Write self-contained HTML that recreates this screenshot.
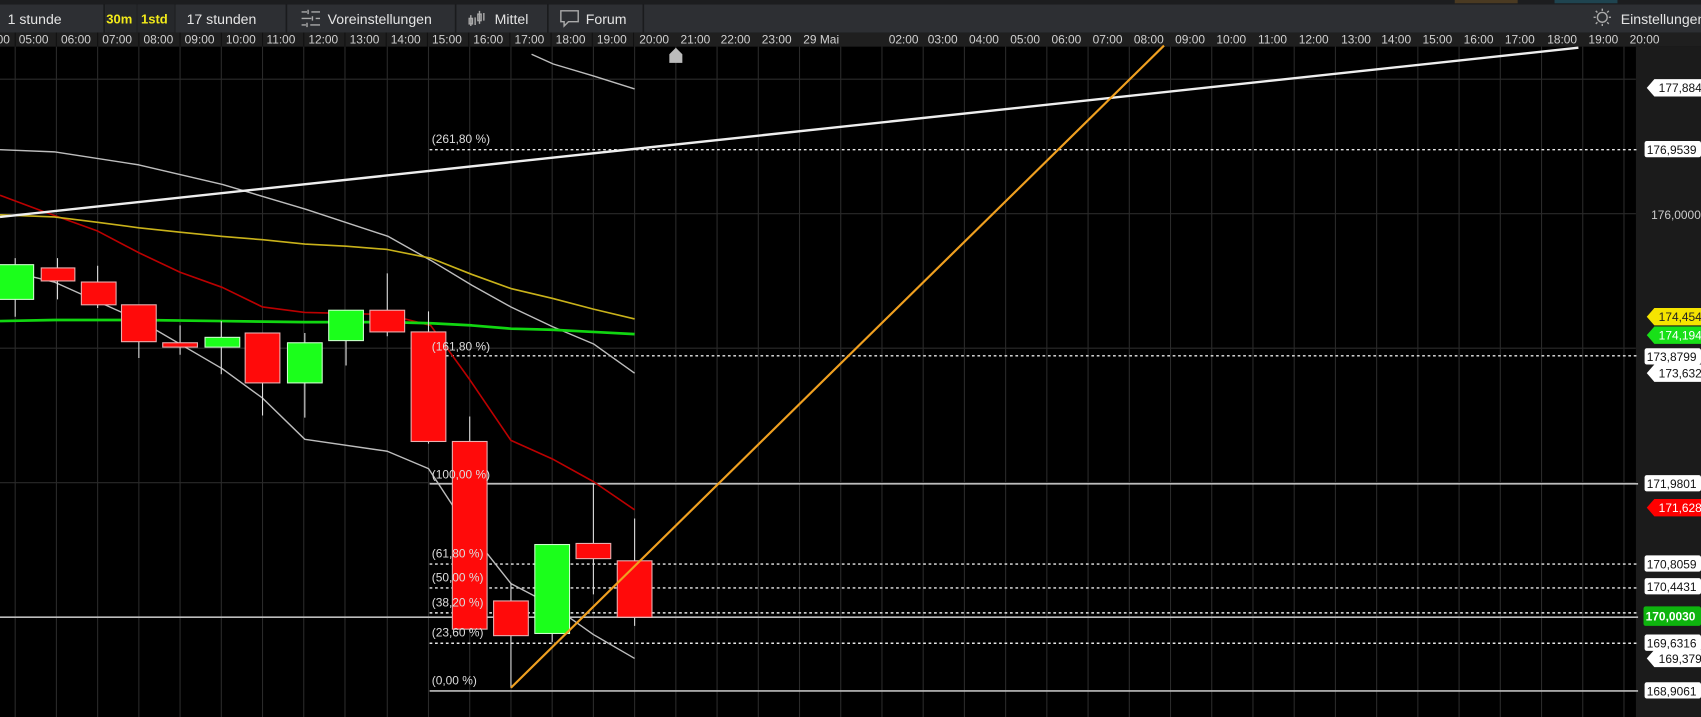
<!DOCTYPE html>
<html><head><meta charset="utf-8"><style>
html,body{margin:0;padding:0;background:#000;overflow:hidden}
svg{display:block}
text{font-family:"Liberation Sans",sans-serif}
</style></head><body>
<svg width="1701" height="717" viewBox="0 0 1568 661" preserveAspectRatio="none" xmlns="http://www.w3.org/2000/svg">
<rect x="0" y="0" width="1568" height="661" fill="#000"/>
<rect x="0" y="0" width="1568" height="4" fill="#1c1d1f"/>
<rect x="1341" y="0" width="58" height="3" fill="#4a3a22"/>
<rect x="1433" y="0" width="58" height="3" fill="#1f4450"/>
<rect x="0" y="4" width="1568" height="26" fill="#2d2f33"/>
<g stroke="#1a1b1d" stroke-width="1.5">
<line x1="96" y1="4" x2="96" y2="30"/><line x1="126" y1="4" x2="126" y2="30"/><line x1="161" y1="4" x2="161" y2="30"/>
<line x1="264" y1="4" x2="264" y2="30"/><line x1="420" y1="4" x2="420" y2="30"/><line x1="505" y1="4" x2="505" y2="30"/><line x1="593" y1="4" x2="593" y2="30"/>
</g>
<rect x="97" y="4" width="29" height="26" fill="#26282b"/>
<rect x="127" y="4" width="34" height="26" fill="#26282b"/>
<g font-size="13" fill="#e4e4e4">
<text x="7" y="22">1 stunde</text>
<text x="98" y="21.5" fill="#f2ea1a" font-weight="bold" font-size="12">30m</text>
<text x="130" y="21.5" fill="#f2ea1a" font-weight="bold" font-size="12">1std</text>
<text x="172" y="22">17 stunden</text>
<text x="302" y="22">Voreinstellungen</text>
<text x="456" y="22">Mittel</text>
<text x="540" y="22">Forum</text>
<text x="1494" y="22">Einstellungen</text>
</g>
<g stroke="#aaa" stroke-width="1.3" fill="none">
<path d="M278 11h5m4 0h8M278 17h9m4 0h4M278 23h4m4 0h9M284 9v4M288 15v4M283 21v4"/>
<path d="M434 14v10M438 16v7M442 10v12M446 12v7"/><rect x="432.5" y="17" width="3" height="5"/><rect x="440.5" y="13" width="3" height="6"/>
<path d="M517 10h16v10h-9l-4 4v-4h-3z"/>
<circle cx="1477" cy="16" r="4.5"/><path d="M1477 8v2M1477 22v2M1469 16h2M1483 16h2M1471 10l1.5 1.5M1481.5 20.5l1.5 1.5M1483 10l-1.5 1.5M1472.5 20.5l-1.5 1.5"/>
</g>
<rect x="0" y="30" width="1568" height="13" fill="#1f1f1f"/>
<g font-size="11" fill="#d0d0d0" text-anchor="middle">
<text x="3" y="40">00</text>
<text x="31" y="40">05:00</text><text x="70" y="40">06:00</text><text x="108" y="40">07:00</text><text x="146" y="40">08:00</text><text x="184" y="40">09:00</text><text x="222" y="40">10:00</text><text x="259" y="40">11:00</text><text x="298" y="40">12:00</text><text x="336" y="40">13:00</text><text x="374" y="40">14:00</text><text x="412" y="40">15:00</text><text x="450" y="40">16:00</text><text x="488" y="40">17:00</text><text x="526" y="40">18:00</text><text x="564" y="40">19:00</text><text x="603" y="40">20:00</text><text x="641" y="40">21:00</text><text x="678" y="40">22:00</text><text x="716" y="40">23:00</text><text x="757" y="40">29 Mai</text>
<text x="833" y="40">02:00</text><text x="869" y="40">03:00</text><text x="907" y="40">04:00</text><text x="945" y="40">05:00</text><text x="983" y="40">06:00</text><text x="1021" y="40">07:00</text><text x="1059" y="40">08:00</text><text x="1097" y="40">09:00</text><text x="1135" y="40">10:00</text><text x="1173" y="40">11:00</text><text x="1211" y="40">12:00</text><text x="1250" y="40">13:00</text><text x="1287" y="40">14:00</text><text x="1325" y="40">15:00</text><text x="1363" y="40">16:00</text><text x="1401" y="40">17:00</text><text x="1440" y="40">18:00</text><text x="1478" y="40">19:00</text><text x="1516" y="40">20:00</text>
</g>
<g stroke="#111" stroke-width="1">
<line x1="14" y1="30" x2="14" y2="43"/><line x1="52" y1="30" x2="52" y2="43"/><line x1="90" y1="30" x2="90" y2="43"/><line x1="128" y1="30" x2="128" y2="43"/><line x1="166" y1="30" x2="166" y2="43"/><line x1="204" y1="30" x2="204" y2="43"/><line x1="242" y1="30" x2="242" y2="43"/><line x1="280" y1="30" x2="280" y2="43"/><line x1="318" y1="30" x2="318" y2="43"/><line x1="356" y1="30" x2="356" y2="43"/><line x1="394" y1="30" x2="394" y2="43"/><line x1="432" y1="30" x2="432" y2="43"/><line x1="470" y1="30" x2="470" y2="43"/><line x1="508" y1="30" x2="508" y2="43"/><line x1="546" y1="30" x2="546" y2="43"/><line x1="584" y1="30" x2="584" y2="43"/>
</g>
<rect x="1508" y="43" width="60" height="618" fill="#1b1b1b"/>
<g stroke="#2a2a2a" stroke-width="1">
<path d="M14 43V661M52 43V661M90 43V661M128 43V661M166 43V661M204 43V661M242 43V661M280 43V661M318 43V661M357 43V661M395 43V661M433 43V661M471 43V661M509 43V661M547 43V661M585 43V661M623 43V661M661 43V661M699 43V661M737 43V661M775 43V661M813 43V661M851 43V661M889 43V661M927 43V661M965 43V661M1003 43V661M1041 43V661M1079 43V661M1117 43V661M1155 43V661M1193 43V661M1231 43V661M1269 43V661M1307 43V661M1345 43V661M1383 43V661M1421 43V661M1459 43V661M1497 43V661"/>
<path d="M0 73H1508M0 197H1508M0 321H1508M0 445H1508"/>
</g>
<g stroke="#e8e8e8" stroke-width="1.3" stroke-dasharray="2.5 2.5" fill="none">
<path d="M396 138H1510M396 328H1510M396 520H1510M396 542H1510M396 565H1510M396 593H1510"/>
</g>
<g stroke="#bdbdbd" stroke-width="1.5"><path d="M396 446H1510M396 637H1510M0 569H1510"/></g>
<g fill="none" stroke-linejoin="round">
<polyline stroke="#bdbdbd" stroke-width="1.3" points="490,50 510,59 547,70 585,82"/>
<polyline stroke="#bdbdbd" stroke-width="1.3" points="0,138 50,140 128,152 205,170 282,193 358,218 397,240 435,263 471,283 509,301 547,317 585,344"/>
<polyline stroke="#bdbdbd" stroke-width="1.3" points="0,248 50,260 128,295 205,340 242,367 281,405 357,416 395,432 433,490 471,538 509,558 547,585 585,607"/>
<polyline stroke="#b00" stroke-width="1.5" points="0,180 40,195 90,213 128,233 166,251 205,265 242,283 281,288 319,289 357,290 397,300 433,350 471,406 509,423 547,444 585,470"/>
<polyline stroke="#c9b21a" stroke-width="1.5" points="0,198 50,200 90,205 128,210 166,214 205,218 242,221 281,225 319,227 357,230 397,238 435,253 471,266 509,275 547,285 585,294"/>
<polyline stroke="#11d611" stroke-width="2.5" points="0,296 50,295 128,295 205,296 281,297 357,297 397,298 435,300 471,303 509,304 547,306 585,308"/>
</g>
<g stroke="#ddd" stroke-width="1">
<path d="M14 238V292M53 238V276M90 245V284M128 281V330M166 300V327M204 296V345M242 307V383M281 307V385M319 286V337M357 252V310M395 287V409M433 384V582M471 538V634M509 502V592M547 446V548M585 478V577"/>
</g>
<g stroke="#e8b0b0" stroke-width="1">
<rect x="-2" y="244" width="33" height="32" fill="#1bff1b" stroke="#cfc"/>
<rect x="38" y="247" width="31" height="12" fill="#ff0a0a"/>
<rect x="75" y="260" width="32" height="21" fill="#ff0a0a"/>
<rect x="112" y="281" width="32" height="34" fill="#ff0a0a"/>
<rect x="150" y="316" width="32" height="4" fill="#ff0a0a"/>
<rect x="189" y="311" width="32" height="9" fill="#1bff1b" stroke="#cfc"/>
<rect x="226" y="307" width="32" height="46" fill="#ff0a0a"/>
<rect x="265" y="316" width="32" height="37" fill="#1bff1b" stroke="#cfc"/>
<rect x="303" y="286" width="32" height="28" fill="#1bff1b" stroke="#cfc"/>
<rect x="341" y="286" width="32" height="20" fill="#ff0a0a"/>
<rect x="379" y="306" width="32" height="101" fill="#ff0a0a"/>
<rect x="417" y="407" width="32" height="173" fill="#ff0a0a"/>
<rect x="455" y="554" width="32" height="32" fill="#ff0a0a"/>
<rect x="493" y="502" width="32" height="82" fill="#1bff1b" stroke="#cfc"/>
<rect x="531" y="501" width="32" height="14" fill="#ff0a0a"/>
<rect x="569" y="517" width="32" height="52" fill="#ff0a0a"/>
</g>
<g font-size="11" fill="#ddd">
<text x="398" y="132">(261,80 %)</text><text x="398" y="323">(161,80 %)</text><text x="398" y="441">(100,00 %)</text><text x="398" y="514">(61,80 %)</text><text x="398" y="536">(50,00 %)</text><text x="398" y="559">(38,20 %)</text><text x="398" y="587">(23,60 %)</text><text x="398" y="631">(0,00 %)</text>
</g>
<line x1="0" y1="200" x2="1455" y2="44" stroke="#eee" stroke-width="2.2"/>
<line x1="471" y1="634" x2="1073" y2="42" stroke="#f0a020" stroke-width="2"/>
<path d="M617 58V50l6-6 6 6v8z" fill="#bbb"/>
<g font-size="11">
<path d="M1525 73h43v16h-43l-7-8z" fill="#fff"/><text x="1529" y="85" fill="#111">177,884</text>
<rect x="1516" y="130" width="52" height="15" fill="#fff" rx="2"/><text x="1518" y="142" fill="#111">176,9539</text>
<text x="1522" y="202" fill="#ccc">176,0000</text>
<path d="M1525 284h43v16h-43l-7-8z" fill="#f5e400"/><text x="1529" y="296" fill="#222">174,454</text>
<path d="M1525 301h43v16h-43l-7-8z" fill="#18e018"/><text x="1529" y="313" fill="#fff">174,194</text>
<rect x="1516" y="321" width="52" height="15" fill="#fff" rx="2"/><text x="1518" y="333" fill="#111">173,8799</text>
<path d="M1525 336h43v16h-43l-7-8z" fill="#fff"/><text x="1529" y="348" fill="#111">173,632</text>
<rect x="1516" y="438" width="52" height="15" fill="#fff" rx="2"/><text x="1518" y="450" fill="#111">171,9801</text>
<path d="M1525 460h43v16h-43l-7-8z" fill="#f00"/><text x="1529" y="472" fill="#fff">171,628</text>
<rect x="1516" y="512" width="52" height="15" fill="#fff" rx="2"/><text x="1518" y="524" fill="#111">170,8059</text>
<rect x="1516" y="533" width="52" height="15" fill="#fff" rx="2"/><text x="1518" y="545" fill="#111">170,4431</text>
<rect x="1515" y="559" width="53" height="18" fill="#0eb40e" rx="2"/><text x="1517" y="572" fill="#fff" font-weight="bold">170,0030</text>
<rect x="1516" y="585" width="52" height="15" fill="#fff" rx="2"/><text x="1518" y="597" fill="#111">169,6316</text>
<path d="M1525 599h43v16h-43l-7-8z" fill="#fff"/><text x="1529" y="611" fill="#111">169,379</text>
<rect x="1516" y="629" width="52" height="15" fill="#fff" rx="2"/><text x="1518" y="641" fill="#111">168,9061</text>
</g>
</svg>
</body></html>
